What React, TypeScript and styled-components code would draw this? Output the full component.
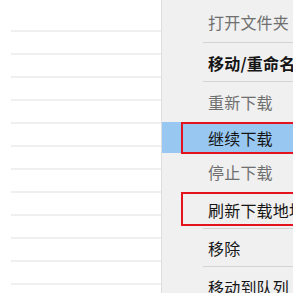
import React from 'react';
import styled, { createGlobalStyle } from 'styled-components';

const GlobalStyle = createGlobalStyle`
  html, body {
    margin: 0;
    padding: 0;
    background: #ffffff;
  }
  body {
    font-family: "Noto Sans CJK SC", "Noto Sans", sans-serif;
  }
`;

const Page = styled.div`
  width: 304px;
  height: 304px;
  background: #ffffff;
`;

const Shot = styled.div`
  width: 293px;
  height: 293px;
  display: flex;
  flex-direction: row;
  overflow: hidden;
`;

const List = styled.div`
  width: 150px;
  padding: 9px 0 0 11px;
  display: flex;
  flex-direction: column;
  border-right: 1px solid #dedede;
`;

const ListRow = styled.div`
  height: 21px;
  flex-shrink: 0;
  border-bottom: 2px solid #efefef;
`;

const Menu = styled.div`
  position: relative;
  flex: 1;
  background: #f0f0f0;
  display: flex;
  flex-direction: column;
  overflow: hidden;
`;

const Item = styled.div<{ $h: number; $sep?: boolean; $active?: boolean }>`
  position: relative;
  flex-shrink: 0;
  height: ${(p) => p.$h}px;
  display: flex;
  align-items: center;
  padding-left: 46px;
  background: ${(p) => (p.$active ? '#98c8f2' : 'transparent')};

  &::after {
    content: '';
    display: ${(p) => (p.$sep ? 'block' : 'none')};
    position: absolute;
    left: 41px;
    right: 0;
    bottom: 0;
    height: 1px;
    background: #d4d4d4;
  }
`;

const Label = styled.span<{ $dim?: boolean; $bold?: boolean }>`
  font-size: 16px;
  white-space: nowrap;
  letter-spacing: 0.2px;
  color: ${(p) => (p.$dim ? '#6f6f6f' : '#151515')};
  font-weight: ${(p) => (p.$bold ? 700 : 400)};
`;

const Mark = styled.div<{ $top: number; $h: number }>`
  position: absolute;
  left: 19px;
  right: -10px;
  top: ${(p) => p.$top}px;
  height: ${(p) => p.$h}px;
  border: 2px solid #e3141d;
  box-sizing: border-box;
  pointer-events: none;
`;

const items = [
  { text: '打开文件夹', h: 43, sep: true, dim: true, pad: 4 },
  { text: '移动/重命名', h: 39, sep: true, bold: true },
  { text: '重新下载', h: 40, dim: true },
  { text: '继续下载', h: 31, active: true },
  { text: '停止下载', h: 37, dim: true },
  { text: '刷新下载地址', h: 39, sep: true },
  { text: '移除', h: 38, sep: true },
  { text: '移动到队列', h: 40 },
];

export default function App() {
  return (
    <Page>
      <GlobalStyle />
      <Shot>
        <List>
          {Array.from({ length: 12 }).map((_, i) => (
            <ListRow key={i} />
          ))}
        </List>
        <Menu>
          {items.map((it) => (
            <Item key={it.text} $h={it.h} $sep={it.sep} $active={it.active}>
              <Label $dim={it.dim} $bold={it.bold}>
                {it.text}
              </Label>
            </Item>
          ))}
          <Mark $top={122} $h={32} />
          <Mark $top={192} $h={34} />
        </Menu>
      </Shot>
    </Page>
  );
}
